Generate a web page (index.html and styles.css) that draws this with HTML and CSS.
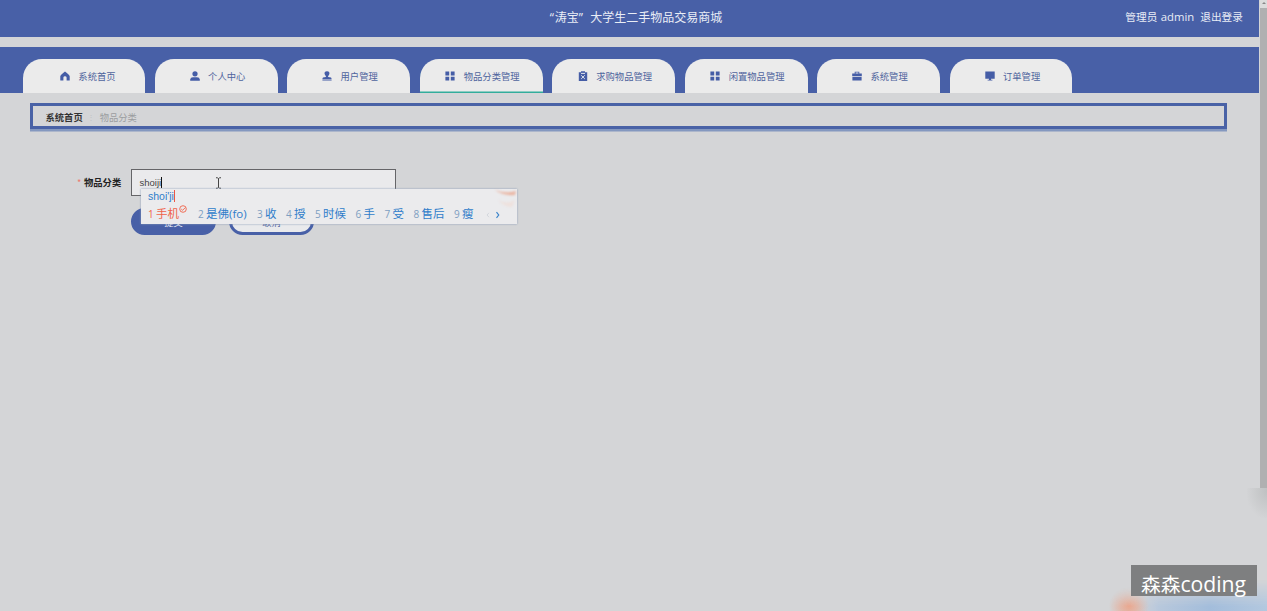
FILE: index.html
```
<!DOCTYPE html>
<html lang="zh-CN">
<head>
<meta charset="utf-8">
<title>“涛宝”大学生二手物品交易商城</title>
<link rel="stylesheet" href="styles.css">
</head>
<body>
<div class="page">
  <header class="header">
    <div class="title"><span class="quote">“</span>涛宝<span class="quote close">”</span>大学生二手物品交易商城</div>
    <div class="account"><span>管理员 <span class="latin">admin</span></span><span>退出登录</span></div>
  </header>
  <nav class="nav">
    <a class="tab home"><svg class="icon" viewBox="0 0 10 10"><path d="M5 .4Q.8 3.4.3 5.2V9.6H3.4V6.6Q3.5 5.3 5 5.3T6.6 6.6V9.6H9.7V5.2Q9.2 3.4 5 .4Z"/></svg><span>系统首页</span></a>
    <a class="tab"><svg class="icon" viewBox="0 0 10 10"><circle cx="5" cy="2.8" r="2.6"/><path d="M.2 9.7V8.6Q.4 6.3 3 6.3H7Q9.6 6.3 9.8 8.6V9.7Z"/></svg><span>个人中心</span></a>
    <a class="tab"><svg class="icon" viewBox="0 0 10 10"><path d="M5 .3C2.7.3 2.1 2 2.8 3.5L3.9 5.2V6L1 6.6Q.4 7 .4 8.3H9.6Q9.6 7 9 6.6L6.1 6V5.2L7.2 3.5C7.9 2 7.3.3 5 .3ZM.4 8.8H9.6V9.6H.4Z"/></svg><span>用户管理</span></a>
    <a class="tab active"><svg class="icon" viewBox="0 0 10 10"><path d="M.4.6H4.2V4.4H.4ZM5.8.6H9.6V4.4H5.8ZM.4 5.8H4.2V9.6H.4ZM5.8 5.8H9.6V9.6H5.8Z"/></svg><span>物品分类管理</span></a>
    <a class="tab"><svg class="icon" viewBox="0 0 10 10"><path d="M.8 1.2H3V.3H7V1.2H9.2V9.9H.8Z"/><path class="cut" d="M3 2.4H7M3.2 4.3 6.8 7.9M6.8 4.3 3.2 7.9"/></svg><span>求购物品管理</span></a>
    <a class="tab"><svg class="icon" viewBox="0 0 10 10"><path d="M.4.6H4.2V4.4H.4ZM5.8.6H9.6V4.4H5.8ZM.4 5.8H4.2V9.6H.4ZM5.8 5.8H9.6V9.6H5.8Z"/></svg><span>闲置物品管理</span></a>
    <a class="tab"><svg class="icon" viewBox="0 0 10 10"><path d="M2.7 2.5V.7H7.3V2.5H9.8V5.3H.2V2.5ZM3.6 2.5H6.4V1.5H3.6ZM.4 6H9.6V9.4H.4Z" fill-rule="evenodd"/></svg><span>系统管理</span></a>
    <a class="tab"><svg class="icon" viewBox="0 0 10 10"><path d="M.3.6H9.7V7.7H.3ZM4 7.7H6V8.8H7.4V9.6H2.6V8.8H4Z"/></svg><span>订单管理</span></a>
  </nav>
  <main>
    <div class="breadcrumb"><b>系统首页</b><span class="separator">⋮</span><span class="current">物品分类</span></div>
    <div class="form">
      <div class="field">
        <label class="label"><span class="required">*</span>物品分类</label>
        <div class="input"><span>shoiji</span><i class="caret"></i></div>
      </div>
      <div class="buttons"><button class="button primary">提交</button><button class="button">取消</button></div>
    </div>
  </main>
</div>
<svg class="pointer" viewBox="0 0 7 12"><path d="M1 .7Q3 .7 3.5 1.5Q4 .7 6 .7M3.5 1.5V10.5M1 11.3Q3 11.3 3.5 10.5Q4 11.3 6 11.3"/></svg>
<div class="ime">
  <svg class="decoration" viewBox="0 0 26 24"><path d="M4 1Q12 7 24 6L25 2Q14 5 4 1Z" fill="#eab5a3"/><path d="M7 11Q16 16 24 11L21 18Q13 18 7 11Z" fill="#eee1dd"/></svg>
  <div class="composition">shoi'ji<i class="caret"></i></div>
  <div class="candidates">
    <span class="candidate selected"><i>1</i>手机<svg class="badge" viewBox="0 0 8 8"><circle cx="4" cy="4" r="3.3"/><path d="M2.2 4 3.6 5.3 6.4 2.5"/></svg></span>
    <span class="candidate"><i>2</i>是佛<span class="latin">(fo)</span></span>
    <span class="candidate"><i>3</i>收</span>
    <span class="candidate"><i>4</i>授</span>
    <span class="candidate"><i>5</i>时候</span>
    <span class="candidate"><i>6</i>手</span>
    <span class="candidate"><i>7</i>受</span>
    <span class="candidate"><i>8</i>售后</span>
    <span class="candidate"><i>9</i>瘦</span>
    <svg class="pager" viewBox="0 0 16 8"><path class="previous" d="M3 1.8 1 4 3 6.2"/><path d="M10.5 1.2 12.7 4 10.5 6.8"/></svg>
  </div>
</div>
<div class="scrollbar"><div class="scroll-up"></div></div>
<div class="scroll-shade"></div>
<div class="glow"></div>
<div class="watermark">森森<span class="latin">coding</span></div>
</body>
</html>
```
FILE: styles.css
```
* { box-sizing: border-box; }
body {
  position: relative;
  width: 1267px;
  height: 611px;
  margin: 0;
  overflow: hidden;
  background: #d4d5d7;
  font-family: "Noto Sans CJK SC", sans-serif;
}
i { font-style: normal; }
.latin { font-family: "Open Sans", "Noto Sans", sans-serif; }
.page { width: 1259px; }
.header {
  display: grid;
  grid-template-columns: 1fr auto 1fr;
  height: 36.6px;
  padding: 0 16px 2px 29px;
  align-items: center;
  background: #4860a7;
  color: #e9edf6;
}
.title { grid-column: 2; font-size: 12px; line-height: 18px; white-space: nowrap; }
.quote { display: inline-block; width: 5px; font-family: "Open Sans", sans-serif; }
.quote.close { width: 11.5px; }
.account { display: flex; justify-content: flex-end; gap: 6px; font-size: 10.7px; line-height: 16px; white-space: nowrap; }
.account .latin { font-size: 11.3px; margin-left: 1px; }
.nav {
  display: flex;
  gap: 9.9px;
  height: 45.8px;
  margin-top: 10.3px;
  padding: 12.4px 0 0 22.5px;
  background: #4860a7;
}
.tab {
  display: flex;
  width: 122.6px;
  gap: 8.3px;
  align-items: center;
  justify-content: center;
  border-radius: 19px 19px 0 0;
  background: #ebebeb;
  color: #4f649d;
  padding: 1px 0 0 2.5px;
  font-size: 9.3px;
  line-height: 14px;
}
.tab.home { padding-left: 8px; }
.tab.active { box-shadow: inset 0 -1.5px #32ad9c; }
.icon { width: 10px; height: 10px; fill: #455da6; }
.cut { fill: none; stroke: #e1e5ee; stroke-width: 1; }
.breadcrumb {
  display: flex;
  width: 1197px;
  height: 26.5px;
  margin: 10.3px 0 0 30px;
  padding: 1px 12.5px 0;
  align-items: center;
  border: 3px solid #4962a6;
  box-shadow: 0 2.5px #8498bf;
  font-size: 9.3px;
  line-height: 14px;
  color: #333;
}
.separator { width: 17px; text-align: center; color: #c0c2c5; font-size: 8px; }
.current { color: #9b9da0; }
.form { padding: 39.5px 0 0 76px; }
.field { display: flex; height: 27px; align-items: center; }
.label { width: 55px; padding-left: 1px; font-size: 9.3px; font-weight: 700; line-height: 14px; color: #222; }
.required { display: inline-block; width: 7px; color: #ed7d74; font-weight: 400; }
.input {
  display: flex;
  width: 265px;
  height: 27px;
  align-items: center;
  padding-left: 7.5px;
  border: 1px solid #656568;
  background: #eaeaec;
  color: #444;
  font: 9.5px "Liberation Sans", sans-serif;
}
.input .caret { width: 1px; height: 11px; background: #111; }
.buttons { display: flex; gap: 13px; margin: 12.5px 0 0 55px; }
.button {
  width: 85px;
  height: 27px;
  padding: 0;
  border: 3px solid #4860a7;
  border-radius: 14px;
  background: #e9eaec;
  color: #5265a0;
  font: 9.3px/14px "Noto Sans CJK SC", sans-serif;
}
.primary { background: #4860a7; color: #e9edf6; }
.pointer { position: absolute; left: 215px; top: 177px; width: 7px; height: 12px; fill: none; stroke: #444; stroke-width: 1; }
.ime {
  position: absolute;
  left: 141px;
  top: 189px;
  width: 376px;
  height: 35px;
  padding: 0 7px;
  background: #ebebed;
  box-shadow: 0 0 2px #899cb8;
  color: #2f7dca;
}
.decoration { position: absolute; right: 0; top: 0; width: 26px; height: 24px; filter: blur(.8px); }
.composition { display: flex; height: 15px; padding-bottom: 1px; align-items: center; font: 10.5px/14px "Liberation Sans", sans-serif; }
.composition .caret { width: 1px; height: 12px; background: #ed5545; }
.candidates {
  display: grid;
  grid-template-columns: 50px 59px 29px 29px 40.5px 29px 29px 40.5px 32px 16px;
  align-items: center;
  height: 19px;
  font-size: 11.5px;
  line-height: 17px;
}
.candidate { display: flex; align-items: center; white-space: nowrap; }
.candidate i { width: 8px; font: 10px/16px "Open Sans", sans-serif; color: #7d9ec1; }
.candidate.selected, .candidate.selected i { color: #ef6249; }
.badge { width: 8px; height: 8px; align-self: flex-start; fill: none; stroke: currentColor; stroke-width: .9; }
.pager { width: 16px; height: 8px; margin-top: 3px; fill: none; stroke: #3a83ca; stroke-width: 1.2; }
.pager .previous { stroke: #cdd2d8; stroke-width: .8; }
.scrollbar { position: absolute; left: 1260px; top: 0; width: 7px; height: 488px; background: #b0b0b1; }
.scroll-up { height: 8px; background: #dcdcdc; }
.scroll-up::after { content: ""; display: block; width: 0; margin-left: 2px; padding-top: 2px; border: 2px solid transparent; border-top: 0; border-bottom: 2px solid #888; }
.scroll-shade { position: absolute; left: 1247px; top: 488px; width: 20px; height: 30px; background: radial-gradient(ellipse at 100% 10%, #bfc1c2, transparent 75%); }
.glow {
  position: absolute;
  left: 1100px;
  top: 580px;
  width: 167px;
  height: 31px;
  background:
    radial-gradient(ellipse 20px 19px at 29px 26px, #e9a78f, #e9a78f99 45%, transparent),
    linear-gradient(to right, transparent 35px, #b8c8dc 58px, #a3bddb 110px, #b3c8df);
  -webkit-mask-image: linear-gradient(transparent, #000 85%);
  mask-image: linear-gradient(transparent, #000 85%);
}
.watermark {
  position: absolute;
  left: 1131px;
  top: 565px;
  width: 126px;
  height: 31px;
  padding: 4px 0 0 10px;
  background: #7e7f80;
  color: #fff;
  font-size: 19.7px;
  line-height: 30px;
  white-space: nowrap;
}
.watermark .latin { font-size: 21.2px; }
```
